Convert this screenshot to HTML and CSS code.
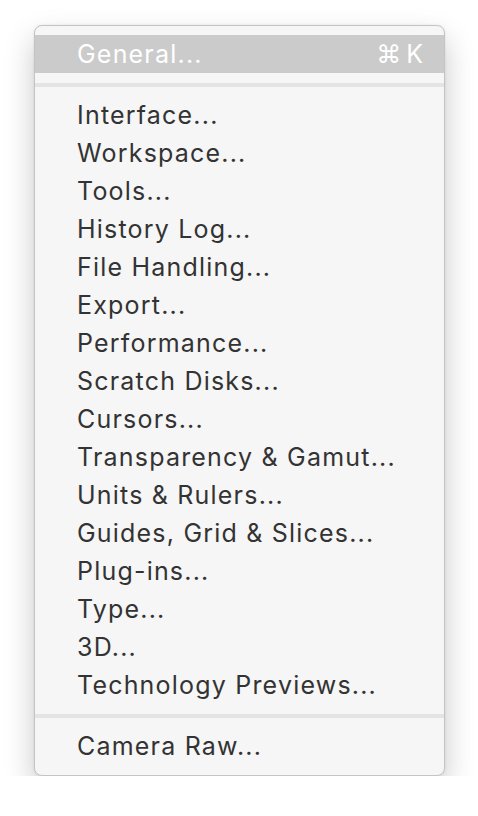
FILE: index.html
```html
<!DOCTYPE html>
<html>
<head>
    <title>Preferences</title>
    <link rel="stylesheet" href="styles.css">
</head>
<body>
    <div class="menu">
        <div class="item selected"><span>General...</span><span class="key">&#8984;K</span></div>
        <div class="sep"></div>
        <div class="item">Interface...</div>
        <div class="item">Workspace...</div>
        <div class="item">Tools...</div>
        <div class="item">History Log...</div>
        <div class="item">File Handling...</div>
        <div class="item">Export...</div>
        <div class="item">Performance...</div>
        <div class="item">Scratch Disks...</div>
        <div class="item">Cursors...</div>
        <div class="item">Transparency &amp; Gamut...</div>
        <div class="item">Units &amp; Rulers...</div>
        <div class="item">Guides, Grid &amp; Slices...</div>
        <div class="item">Plug-ins...</div>
        <div class="item">Type...</div>
        <div class="item">3D...</div>
        <div class="item">Technology Previews...</div>
        <div class="sep"></div>
        <div class="item">Camera Raw...</div>
    </div>
</body>
</html>
```

FILE: styles.css
```css
body { margin: 0; background: #fff; font-family: Inter, "Noto Sans", sans-serif; }
.menu {
    margin: 25px 0 0 34px;
    width: 411px;
    padding: 9px 0 10px;
    background: #f6f6f6;
    border: 1px solid #c4c4c4;
    border-radius: 8px;
    box-shadow: 0 14px 30px rgba(0, 0, 0, 0.22), 0 0 3px rgba(0, 0, 0, 0.08);
    box-sizing: border-box;
    color: #333;
}
.item {
    height: 38px;
    display: flex;
    align-items: center;
    justify-content: space-between;
    padding: 0 21px 0 42px;
    font-size: 25px;
    letter-spacing: 1.2px;
}
.selected { background: #cbcbcb; color: #fff; }
.key { letter-spacing: 5px; margin-right: -5px; }
.sep { height: 4px; background: #e4e4e4; margin: 10px 0 9px; }
```
